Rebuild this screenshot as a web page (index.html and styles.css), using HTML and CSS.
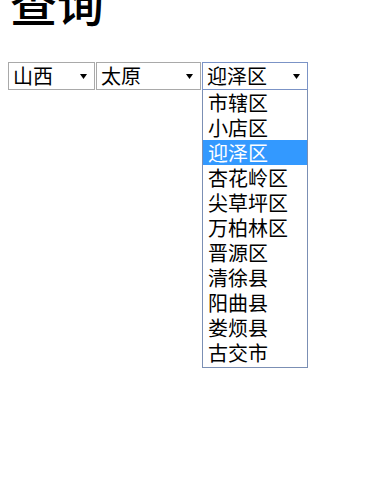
FILE: index.html
```
<!DOCTYPE html>
<html lang="zh-CN">
<head>
    <meta charset="UTF-8">
    <meta name="viewport" content="width=device-width, initial-scale=1.0">
    <title>查询</title>
    <link rel="stylesheet" href="styles.css">
</head>
<body>
    <h1 class="title">查询</h1>
    <div class="selects">
        <div class="select province">
            <span class="value">山西</span>
            <svg class="arrow" width="7" height="5" viewBox="0 0 7 5"><path d="M0 0h7L3.5 5z"/></svg>
        </div>
        <div class="select city">
            <span class="value">太原</span>
            <svg class="arrow" width="7" height="5" viewBox="0 0 7 5"><path d="M0 0h7L3.5 5z"/></svg>
        </div>
        <div class="select district">
            <span class="value">迎泽区</span>
            <svg class="arrow" width="7" height="5" viewBox="0 0 7 5"><path d="M0 0h7L3.5 5z"/></svg>
        </div>
        <ul class="options">
            <li>市辖区</li>
            <li>小店区</li>
            <li class="selected">迎泽区</li>
            <li>杏花岭区</li>
            <li>尖草坪区</li>
            <li>万柏林区</li>
            <li>晋源区</li>
            <li>清徐县</li>
            <li>阳曲县</li>
            <li>娄烦县</li>
            <li>古交市</li>
        </ul>
    </div>
</body>
</html>
```

FILE: styles.css
```
body {
    margin: 0;
    padding: 0 8px;
    background-color: #fff;
    color: #000;
    font-family: "Noto Sans CJK SC", sans-serif;
}

.title {
    margin: -22px 0 37px 2px;
    font-size: 47px;
    line-height: 47px;
    font-weight: 500;
}

.selects {
    display: grid;
    grid-template-columns: 87px 105px 106px;
    column-gap: 1px;
    align-items: start;
}

.select {
    display: flex;
    align-items: center;
    justify-content: space-between;
    box-sizing: border-box;
    height: 28px;
    padding: 0 7px 0 4px;
    border: 1px solid #a9a9a9;
    font-size: 20px;
    line-height: 26px;
}

.district {
    border-color: #7b93c6;
}

.arrow {
    flex: none;
}

.options {
    grid-column: 3;
    margin: 0;
    padding: 0 0 2px;
    list-style: none;
    background-color: #fff;
    border: 1px solid #7b8fb4;
    border-top: none;
}

.options li {
    height: 25px;
    padding-left: 5px;
    font-size: 20px;
    line-height: 25px;
}

.options .selected {
    background-color: #3399ff;
    color: #fff;
}
```
